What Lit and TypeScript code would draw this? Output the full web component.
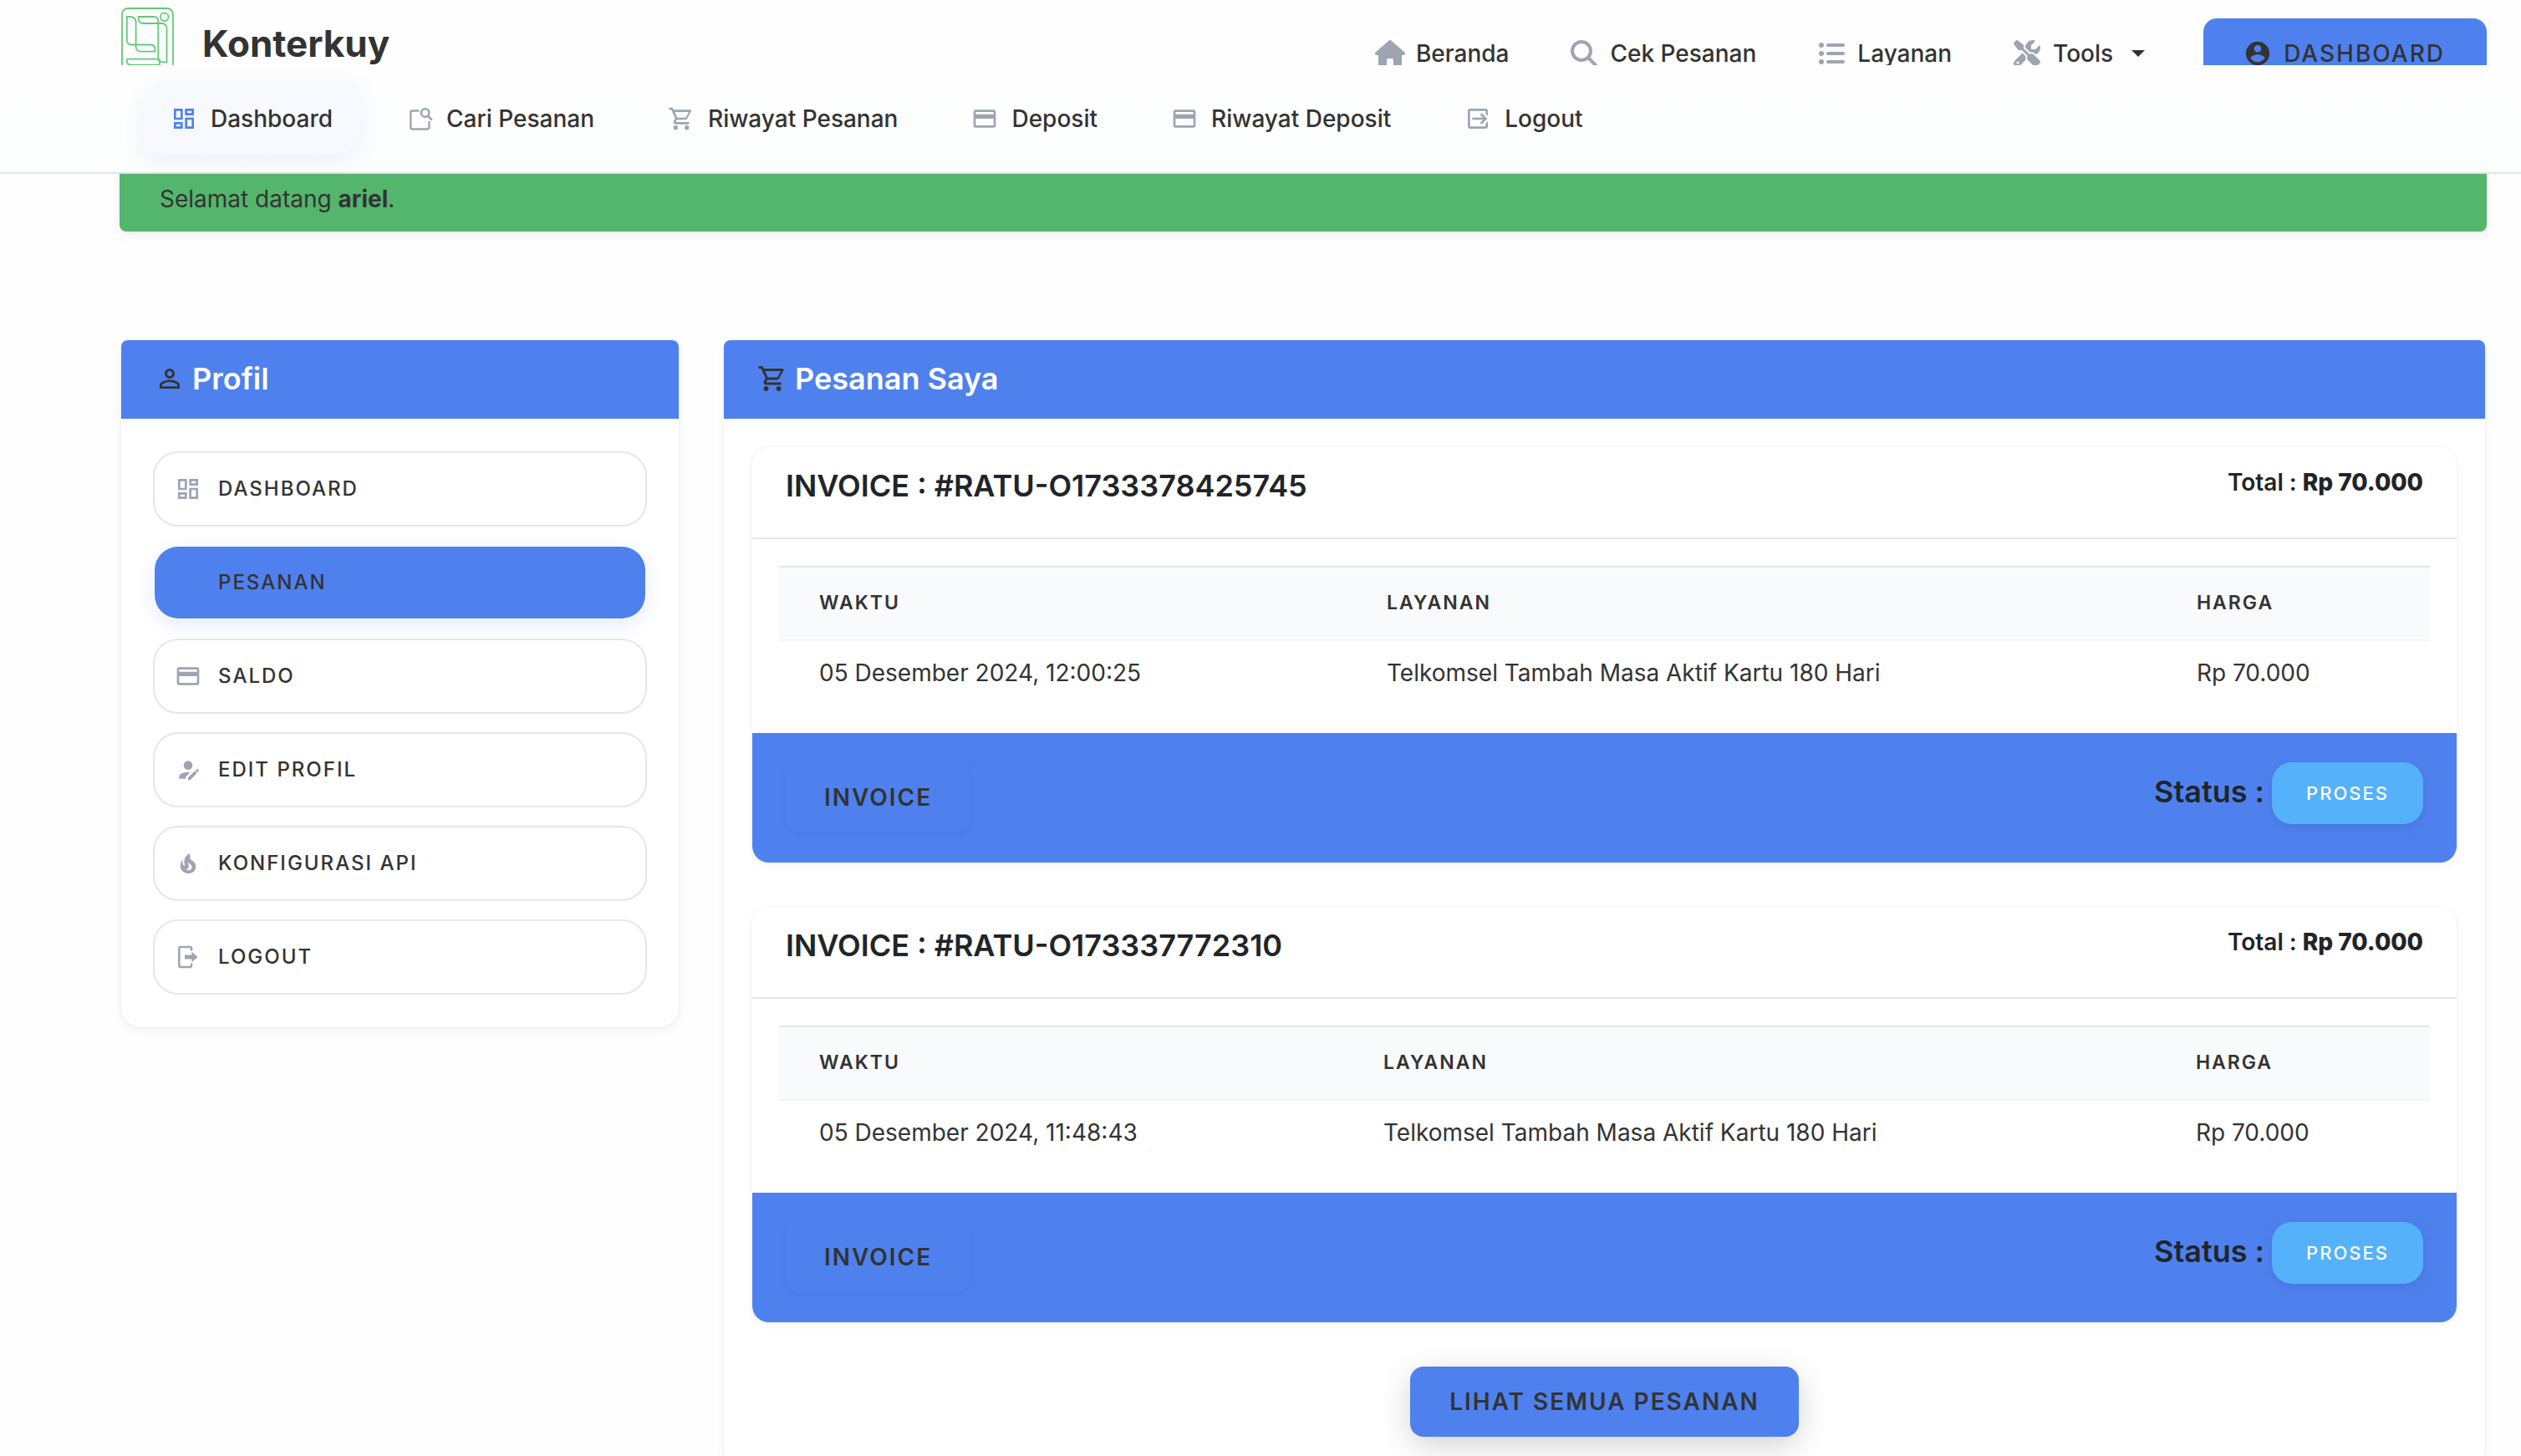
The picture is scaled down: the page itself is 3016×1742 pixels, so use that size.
import { LitElement, html, svg, css } from "lit";
import { customElement, property } from "lit/decorators.js";
import { classMap } from "lit/directives/class-map.js";

const MDI = "0 0 24 24";
const FA = "0 0 512 512";

const icons = {
  dashboard: { box: MDI, art: svg`<path d="M19,5V7H15V5H19M9,5V11H5V5H9M19,13V19H15V13H19M9,17V19H5V17H9M21,3H13V9H21V3M11,3H3V13H11V3M21,11H13V21H21V11M11,15H3V21H11V15Z"/>` },
  card: { box: MDI, art: svg`<path d="M20,8H4V6H20M20,18H4V12H20M20,4H4C2.89,4 2,4.89 2,6V18A2,2 0 0,0 4,20H20A2,2 0 0,0 22,18V6C22,4.89 21.1,4 20,4Z"/>` },
  cart: { box: MDI, art: svg`<path d="M17,18A2,2 0 0,1 19,20A2,2 0 0,1 17,22C15.89,22 15,21.1 15,20C15,18.89 15.89,18 17,18M1,2H4.27L5.21,4H20A1,1 0 0,1 21,5C21,5.17 20.95,5.34 20.88,5.5L17.3,11.97C16.96,12.58 16.3,13 15.55,13H8.1L7.2,14.63L7.17,14.75A0.25,0.25 0 0,0 7.42,15H19V17H7C5.89,17 5,16.1 5,15C5,14.65 5.09,14.32 5.24,14.04L6.6,11.59L3,4H1V2M7,18A2,2 0 0,1 9,20A2,2 0 0,1 7,22C5.89,22 5,21.1 5,20C5,18.89 5.89,18 7,18M16,11L18.78,6H6.14L8.5,11H16Z"/>` },
  noteSearch: { box: MDI, art: svg`<path fill="none" stroke="currentColor" stroke-width="1.8" d="M11.5,4.9H5.4A1.4,1.4 0 0,0 4,6.3V20A1.4,1.4 0 0,0 5.4,21.4H19.2A1.4,1.4 0 0,0 20.6,20V14.2"/><circle cx="17" cy="6.8" r="3.6" fill="none" stroke="currentColor" stroke-width="1.9"/><path fill="none" stroke="currentColor" stroke-width="2" d="M19.4,9.4L23,13.2"/>` },
  logoutBox: { box: MDI, art: svg`<path d="M14.08,15.59L16.67,13H7V11H16.67L14.08,8.41L15.49,7L20.49,12L15.49,17L14.08,15.59M19,3A2,2 0 0,1 21,5V9.67L19,7.67V5H5V19H19V16.33L21,14.33V19A2,2 0 0,1 19,21H5C3.89,21 3,20.1 3,19V5C3,3.89 3.89,3 5,3H19Z"/>` },
  logoutDoor: { box: MDI, art: svg`<path fill="none" stroke="currentColor" stroke-width="1.9" d="M15,6.4V4.2A1.2,1.2 0 0,0 13.8,3H5.2A1.2,1.2 0 0,0 4,4.2V19.8A1.2,1.2 0 0,0 5.2,21H13.8A1.2,1.2 0 0,0 15,19.8V17.6"/><path d="M9,10.2H15.4V7.4L20.6,12L15.4,16.6V13.8H9Z"/>` },
  person: { box: MDI, art: svg`<path d="M12,4A4,4 0 0,1 16,8A4,4 0 0,1 12,12A4,4 0 0,1 8,8A4,4 0 0,1 12,4M12,6A2,2 0 0,0 10,8A2,2 0 0,0 12,10A2,2 0 0,0 14,8A2,2 0 0,0 12,6M12,13C14.67,13 20,14.33 20,17V20H4V17C4,14.33 9.33,13 12,13M12,14.9C9.03,14.9 5.9,16.36 5.9,17V18.1H18.1V17C18.1,16.36 14.97,14.9 12,14.9Z"/>` },
  personEdit: { box: MDI, art: svg`<path d="M21.7,13.35L20.7,14.35L18.65,12.3L19.65,11.3C19.86,11.09 20.21,11.09 20.42,11.3L21.7,12.58C21.91,12.79 21.91,13.14 21.7,13.35M12,18.94L18.06,12.88L20.11,14.93L14.06,21H12V18.94M12,14C7.58,14 4,15.79 4,18V20H10V18.11L14,14.11C13.34,14.03 12.67,14 12,14M12,4A4,4 0 0,0 8,8A4,4 0 0,0 12,12A4,4 0 0,0 16,8A4,4 0 0,0 12,4Z"/>` },
  fire: { box: MDI, art: svg`<path d="M17.66 11.2C17.43 10.9 17.15 10.64 16.89 10.38C16.22 9.78 15.46 9.35 14.82 8.72C13.33 7.26 13 4.85 13.95 3C13 3.23 12.17 3.75 11.46 4.32C8.87 6.4 7.85 10.07 9.07 13.22C9.11 13.32 9.15 13.42 9.15 13.55C9.15 13.77 9 13.97 8.8 14.05C8.57 14.15 8.33 14.09 8.14 13.93C8.08 13.88 8.04 13.83 8 13.76C6.87 12.33 6.69 10.28 7.45 8.64C5.78 10 4.87 12.3 5 14.47C5.06 14.97 5.12 15.47 5.29 15.97C5.43 16.57 5.7 17.17 6 17.7C7.08 19.43 8.95 20.67 10.96 20.92C13.1 21.19 15.39 20.8 17.03 19.32C18.86 17.66 19.5 15 18.56 12.72L18.43 12.46C18.22 12 17.66 11.2 17.66 11.2M14.5 17.5C14.22 17.74 13.76 18 13.4 18.1C12.28 18.5 11.16 17.94 10.5 17.28C11.69 17 12.4 16.12 12.61 15.23C12.78 14.43 12.46 13.77 12.33 13C12.21 12.26 12.23 11.63 12.5 10.94C12.69 11.32 12.89 11.7 13.13 12C13.9 13 15.11 13.44 15.37 14.8C15.41 14.94 15.43 15.08 15.43 15.23C15.46 16.05 15.1 16.95 14.5 17.5H14.5Z"/>` },
  account: { box: MDI, art: svg`<path d="M12,19.2C9.5,19.2 7.29,17.92 6,16C6.03,14 10,12.9 12,12.9C14,12.9 17.97,14 18,16C16.71,17.92 14.5,19.2 12,19.2M12,5A3,3 0 0,1 15,8A3,3 0 0,1 12,11A3,3 0 0,1 9,8A3,3 0 0,1 12,5M12,2A10,10 0 0,0 2,12A10,10 0 0,0 12,22A10,10 0 0,0 22,12C22,6.47 17.5,2 12,2Z"/>` },
  home: { box: "0 0 576 512", art: svg`<path d="M575.8 255.5c0 18-15 32.1-32 32.1h-32l.7 160.2c0 2.7-.2 5.4-.5 8.1V472c0 22.1-17.9 40-40 40H456c-1.1 0-2.2 0-3.3-.1c-1.4 .1-2.8 .1-4.2 .1H416 392c-22.1 0-40-17.9-40-40V448 384c0-17.7-14.3-32-32-32H256c-17.7 0-32 14.3-32 32v64 24c0 22.1-17.9 40-40 40H160 128.1c-1.5 0-3-.1-4.5-.2c-1.2 .1-2.4 .2-3.6 .2H104c-22.1 0-40-17.9-40-40V360c0-.9 0-1.9 .1-2.8V287.6H32c-18 0-32-14-32-32.1c0-9 3-17 10-24L266.4 8c7-7 15-8 22-8s15 2 21 7L564.8 231.5c8 7 12 15 11 24z"/>` },
  search: { box: FA, art: svg`<path d="M416 208c0 45.9-14.9 88.3-40 122.7L502.6 457.4c12.5 12.5 12.5 32.8 0 45.3s-32.8 12.5-45.3 0L330.7 376c-34.4 25.2-76.8 40-122.7 40C93.1 416 0 322.9 0 208S93.1 0 208 0S416 93.1 416 208zM208 352a144 144 0 1 0 0-288 144 144 0 1 0 0 288z"/>` },
  list: { box: FA, art: svg`<path d="M64 144a48 48 0 1 0 0-96 48 48 0 1 0 0 96zM192 64c-17.7 0-32 14.3-32 32s14.3 32 32 32H480c17.7 0 32-14.3 32-32s-14.3-32-32-32H192zm0 160c-17.7 0-32 14.3-32 32s14.3 32 32 32H480c17.7 0 32-14.3 32-32s-14.3-32-32-32H192zm0 160c-17.7 0-32 14.3-32 32s14.3 32 32 32H480c17.7 0 32-14.3 32-32s-14.3-32-32-32H192zM64 464a48 48 0 1 0 0-96 48 48 0 1 0 0 96zm48-208a48 48 0 1 0 -96 0 48 48 0 1 0 96 0z"/>` },
  tools: { box: FA, art: svg`<path d="M78.6 5C69.1-2.4 55.6-1.5 47 7L7 47c-8.5 8.5-9.4 22-2.1 31.6l80 104c4.5 5.9 11.6 9.4 19 9.4h54.1l109 109c-14.7 29-10 65.4 14.3 89.6l112 112c12.5 12.5 32.8 12.5 45.3 0l64-64c12.5-12.5 12.5-32.8 0-45.3l-112-112c-24.2-24.2-60.6-29-89.6-14.3l-109-109V104c0-7.5-3.5-14.5-9.4-19L78.6 5zM19.9 396.1C7.2 408.8 0 426.1 0 444.1C0 481.6 30.4 512 67.9 512c18 0 35.3-7.2 48-19.9L233.7 374.3c-7.8-20.9-9-43.6-3.6-65.1l-61.7-61.7L19.9 396.1zM512 144c0-10.5-1.1-20.7-3.2-30.5c-2.4-11.2-16.1-14.1-24.2-6l-63.9 63.9c-3 3-7.1 4.7-11.3 4.7H352c-8.8 0-16-7.2-16-16V102.6c0-4.2 1.7-8.3 4.7-11.3l63.9-63.9c8.1-8.1 5.2-21.8-6-24.2C388.7 1.1 378.5 0 368 0C288.5 0 224 64.5 224 144l0 .8 85.3 85.3c36-9.1 75.8 .5 104 28.7L429 274.5c49-23 83-72.8 83-130.5zM56 432a24 24 0 1 1 48 0 24 24 0 1 1 -48 0z"/>` },
};

type IconName = keyof typeof icons;

@customElement("app-icon")
class AppIcon extends LitElement {
  @property() name: IconName = "home";

  static styles = css`
    :host { display: inline-flex; flex: none; width: 32px; height: 32px; align-items: center; justify-content: center; }
    .glyph { display: block; width: 100%; height: 100%; fill: currentColor; }
  `;

  render() {
    const icon = icons[this.name];
    return html`<svg class="glyph" viewBox=${icon.box} aria-hidden="true">${icon.art}</svg>`;
  }
}

interface Order {
  id: string;
  time: string;
  service: string;
  price: string;
  status: string;
}

@customElement("order-card")
class OrderCard extends LitElement {
  @property({ attribute: false }) order!: Order;

  static styles = css`
    :host { display: block; }
    .card { border-radius: 20px; background: #fff; overflow: hidden; box-shadow: 0 0 0 2px rgba(30, 40, 60, 0.025), 0 4px 12px rgba(30, 40, 60, 0.04); }
    .head { display: flex; justify-content: space-between; align-items: flex-start; padding: 24px 40px 40px; border-bottom: 2px solid #e5e6ea; color: #212529; }
    .title { margin: 0; font-size: 36px; line-height: 44px; font-weight: 600; }
    .total { font-size: 28px; line-height: 36px; font-weight: 600; }
    .total strong { font-weight: 800; }
    .body { padding: 32px 32px 34px; }
    .table { width: 100%; border-collapse: separate; border-spacing: 0; text-align: left; }
    .table th { padding: 22px 48px 24px; border-top: 2px solid #e5e6ea; border-bottom: 2px solid #f3f4f7; background: #f9fafc; font-size: 23px; line-height: 40px; font-weight: 600; letter-spacing: 2px; }
    .table td { padding: 18px 48px; font-size: 28px; line-height: 40px; }
    .foot { display: flex; justify-content: space-between; align-items: flex-start; padding: 35px 40px 36px; background: #4f81ee; }
    .invoice { padding: 21px 46px; border: 0; border-radius: 16px; background: #4f81ee; color: #333; font: 600 28px/42px Inter, sans-serif; letter-spacing: 2px; box-shadow: 0 2px 6px rgba(20, 40, 120, 0.1); }
    .state { display: flex; align-items: flex-start; gap: 9px; color: #212529; font-size: 36px; line-height: 70px; font-weight: 600; }
    .badge { padding: 0 41px; border-radius: 24px; background: #55b1f9; color: #fff; font-size: 22px; line-height: 74px; font-weight: 500; letter-spacing: 2px; box-shadow: 0 4px 12px rgba(20, 40, 120, 0.12); }
  `;

  render() {
    const o = this.order;
    return html`
      <article class="card">
        <header class="head">
          <h3 class="title">INVOICE : #${o.id}</h3>
          <div class="total">Total : <strong>${o.price}</strong></div>
        </header>
        <div class="body">
          <table class="table">
            <thead><tr><th scope="col">WAKTU</th><th scope="col">LAYANAN</th><th scope="col">HARGA</th></tr></thead>
            <tbody><tr><td>${o.time}</td><td>${o.service}</td><td>${o.price}</td></tr></tbody>
          </table>
        </div>
        <footer class="foot">
          <button class="invoice" type="button">INVOICE</button>
          <div class="state">Status : <span class="badge">${o.status}</span></div>
        </footer>
      </article>
    `;
  }
}

@customElement("app-root")
class AppRoot extends LitElement {
  static styles = css`
    :host { display: block; height: 100vh; overflow-y: auto; scrollbar-width: none; background: #fefefe; color: #333; font-family: Inter, "Liberation Sans", sans-serif; font-size: 28px; line-height: 42px; }
    a { color: inherit; text-decoration: none; }
    .topbar { display: flex; justify-content: space-between; align-items: flex-start; height: 78px; overflow: hidden; padding: 0 41px 0 144px; background: #fefefe; }
    .brand { display: flex; align-items: center; gap: 34px; height: 104px; font-size: 44px; font-weight: 700; }
    .logo { display: block; width: 64px; height: 88px; fill: none; stroke: #62cb78; stroke-width: 1.8; }
    .mainnav { display: flex; align-items: center; gap: 70px; height: 128px; line-height: 28px; font-weight: 500; }
    .mainlink { display: flex; align-items: center; gap: 11px; padding: 0; border: 0; background: none; color: inherit; font: inherit; }
    .mainlink app-icon { width: 40px; color: #9ea4b2; }
    .caret { margin-left: 11px; border: 8px solid transparent; border-top-color: #333; border-bottom: 0; }
    .cta { display: flex; align-items: center; gap: 14px; height: 84px; padding: 0 50px 0 48px; border-radius: 16px; background: #4f81ee; letter-spacing: 2px; }
    .cta app-icon { width: 34px; height: 34px; }
    .subnav { display: flex; gap: 24px; padding: 21px 41px 21px 172px; border-bottom: 2px solid #e5e6ec; background: linear-gradient(#fefefe, #fcfdfd); font-weight: 500; }
    .tab { display: flex; align-items: center; gap: 16px; height: 86px; padding: 0 32px; border-radius: 28px 8px; }
    .tab app-icon { color: #9ea4b2; }
    .tab.active { background: #f7f9fe; box-shadow: 0 6px 24px rgba(79, 130, 238, 0.1); }
    .tab.active app-icon { color: #4f81ee; }
    .page { padding: 0 41px 38px 143px; }
    .alert { padding: 9px 48px 18px; border-radius: 0 0 8px 8px; background: #54b66c; box-shadow: 0 4px 12px rgba(30, 40, 60, 0.08); }
    .alert strong { font-weight: 700; }
    .columns { display: grid; grid-template-columns: minmax(0, 667fr) minmax(0, 2107fr); align-items: start; gap: 54px; padding: 130px 2px 0; }
    .panel { border-radius: 8px 8px 24px 24px; background: #fff; box-shadow: 0 0 0 2px rgba(30, 40, 60, 0.025), 0 4px 12px rgba(30, 40, 60, 0.05); }
    .panelhead { display: flex; align-items: center; gap: 9px; padding: 24px 40px 26px; border-radius: 8px 8px 0 0; background: #4f81ee; }
    .panelhead app-icon { width: 36px; height: 36px; }
    .paneltitle { margin: 0; color: #fff; font-size: 36px; line-height: 44px; font-weight: 600; }
    .menu { display: flex; flex-direction: column; gap: 22px; padding: 39px 38px; }
    .item { display: flex; align-items: center; gap: 20px; box-sizing: border-box; height: 90px; padding: 0 24px; border: 2px solid #e5e6ec; border-radius: 30px; font-size: 24px; font-weight: 500; letter-spacing: 2px; }
    .item app-icon { color: #9ea4b2; }
    .item.active { border-color: transparent; background: #4f81ee padding-box; box-shadow: 0 6px 20px rgba(79, 130, 238, 0.14); }
    .blank { width: 32px; }
    .orders { display: flex; flex-direction: column; gap: 53px; padding: 34px 34px 38px; }
    .all { align-self: center; padding: 21px 47px; border-radius: 16px; background: #4f81ee; font-weight: 600; letter-spacing: 2px; box-shadow: 0 10px 36px rgba(0, 0, 0, 0.18); }
  `;

  private tabs: { icon: IconName; label: string; active?: boolean }[] = [
    { icon: "dashboard", label: "Dashboard", active: true },
    { icon: "noteSearch", label: "Cari Pesanan" },
    { icon: "cart", label: "Riwayat Pesanan" },
    { icon: "card", label: "Deposit" },
    { icon: "card", label: "Riwayat Deposit" },
    { icon: "logoutBox", label: "Logout" },
  ];

  private links: { icon: IconName; label: string }[] = [
    { icon: "home", label: "Beranda" },
    { icon: "search", label: "Cek Pesanan" },
    { icon: "list", label: "Layanan" },
  ];

  private menu: { icon?: IconName; label: string; active?: boolean }[] = [
    { icon: "dashboard", label: "DASHBOARD" },
    { label: "PESANAN", active: true },
    { icon: "card", label: "SALDO" },
    { icon: "personEdit", label: "EDIT PROFIL" },
    { icon: "fire", label: "KONFIGURASI API" },
    { icon: "logoutDoor", label: "LOGOUT" },
  ];

  private orders: Order[] = [
    { id: "RATU-O1733378425745", time: "05 Desember 2024, 12:00:25", service: "Telkomsel Tambah Masa Aktif Kartu 180 Hari", price: "Rp 70.000", status: "PROSES" },
    { id: "RATU-O173337772310", time: "05 Desember 2024, 11:48:43", service: "Telkomsel Tambah Masa Aktif Kartu 180 Hari", price: "Rp 70.000", status: "PROSES" },
  ];

  render() {
    return html`
      <header class="topbar">
        <a class="brand" href="#">
          <svg class="logo" viewBox="0 0 64 88" aria-hidden="true">
            <rect x="2" y="2" width="61" height="84" rx="7" />
            <circle cx="52.7" cy="12.3" r="4.9" />
            <path d="M7.8 12H12Q18.6 12.6 18.6 18.5V45.5H36Q41.6 46 41.6 51V53.6H24Q18.6 53 18.6 47.5V45.5H12.5Q7.8 44.5 7.8 39.5Z" />
            <path d="M21.7 12H40.5Q45.3 12.6 45.3 17.5V20H50Q55.5 20.6 55.5 26V66.4H51Q45.3 65.6 45.3 60V20H27Q21.7 19 21.7 15Z" />
            <path d="M7.8 62.7H44.5Q47 64 47 67V84M7.8 62.7V66Q8.5 69.5 12 69.6H47" />
          </svg>
          <span>Konterkuy</span>
        </a>
        <nav class="mainnav">
          ${this.links.map((l) => html`<a class="mainlink" href="#"><app-icon name=${l.icon}></app-icon>${l.label}</a>`)}
          <button class="mainlink" type="button"><app-icon name="tools"></app-icon>Tools<span class="caret"></span></button>
          <a class="cta" href="#"><app-icon name="account"></app-icon>DASHBOARD</a>
        </nav>
      </header>
      <nav class="subnav">
        ${this.tabs.map((t) => html`<a class=${classMap({ tab: true, active: !!t.active })} href="#"><app-icon name=${t.icon}></app-icon>${t.label}</a>`)}
      </nav>
      <main class="page">
        <div class="alert" role="status">Selamat datang <strong>ariel</strong>.</div>
        <div class="columns">
          <section class="panel">
            <div class="panelhead"><app-icon name="person"></app-icon><h2 class="paneltitle">Profil</h2></div>
            <nav class="menu">
              ${this.menu.map((m) => html`<a class=${classMap({ item: true, active: !!m.active })} href="#">${m.icon ? html`<app-icon name=${m.icon}></app-icon>` : html`<span class="blank"></span>`}${m.label}</a>`)}
            </nav>
          </section>
          <section class="panel">
            <div class="panelhead"><app-icon name="cart"></app-icon><h2 class="paneltitle">Pesanan Saya</h2></div>
            <div class="orders">
              ${this.orders.map((o) => html`<order-card .order=${o}></order-card>`)}
              <a class="all" href="#">LIHAT SEMUA PESANAN</a>
            </div>
          </section>
        </div>
      </main>
    `;
  }
}
